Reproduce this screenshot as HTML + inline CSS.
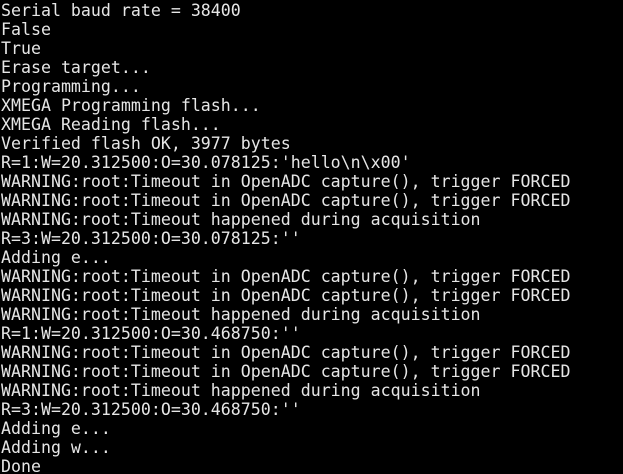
<!DOCTYPE html>
<html><head><style>
html,body{margin:0;padding:0;background:#000;width:623px;height:474px;overflow:hidden}
pre{margin:0;padding:0 0 0 1px;position:relative;top:1px;font-family:"DejaVu Sans Mono","Liberation Mono",monospace;font-size:16.6px;line-height:19px;color:#e6e6e6;white-space:pre}
</style></head><body><pre>Serial baud rate = 38400
False
True
Erase target...
Programming...
XMEGA Programming flash...
XMEGA Reading flash...
Verified flash OK, 3977 bytes
R=1:W=20.312500:O=30.078125:'hello\n\x00'
WARNING:root:Timeout in OpenADC capture(), trigger FORCED
WARNING:root:Timeout in OpenADC capture(), trigger FORCED
WARNING:root:Timeout happened during acquisition
R=3:W=20.312500:O=30.078125:''
Adding e...
WARNING:root:Timeout in OpenADC capture(), trigger FORCED
WARNING:root:Timeout in OpenADC capture(), trigger FORCED
WARNING:root:Timeout happened during acquisition
R=1:W=20.312500:O=30.468750:''
WARNING:root:Timeout in OpenADC capture(), trigger FORCED
WARNING:root:Timeout in OpenADC capture(), trigger FORCED
WARNING:root:Timeout happened during acquisition
R=3:W=20.312500:O=30.468750:''
Adding e...
Adding w...
Done</pre></body></html>
